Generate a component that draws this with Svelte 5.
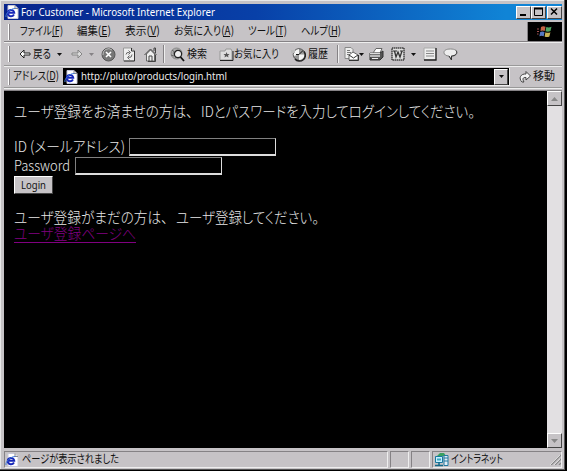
<script>
  const menus = [
    { label: 'ファイル', key: 'F', w: 43 },
    { label: '編集', key: 'E', w: 34 },
    { label: '表示', key: 'V', w: 35 },
    { label: 'お気に入り', key: 'A', w: 60 },
    { label: 'ツール', key: 'T', w: 39 },
    { label: 'ヘルプ', key: 'H', w: 40 }
  ];
</script>

{#snippet label(text, w, key = '')}
  <svg class="label" width={w} height="16">
    <text y="12" textLength={w} lengthAdjust="spacingAndGlyphs">{text}{key ? `(${key})` : ''}</text>
    {#if key}<path d="M{w - 11} 13.500h7" stroke="#111" />{/if}
  </svg>
{/snippet}

{#snippet latin(text, w)}
  <svg class="label latin" width={w} height="16"><text y="12" textLength={w} lengthAdjust="spacingAndGlyphs">{text}</text></svg>
{/snippet}

{#snippet line(text, w)}
  <svg class="line" width={w} height="16"><text y="13" textLength={w} lengthAdjust="spacingAndGlyphs">{text}</text></svg>
{/snippet}

{#snippet page()}
  <svg class="page" width="14" height="14" viewBox="0 0 14 14">
    <path d="M3 .5h7l3 3v10H3z" fill="#fff" stroke="#c8c8d8" />
    <path d="M10 .5v3h3" fill="none" stroke="#888" />
    <path d="M9 9.5C7.500 12 3 11.800 2.800 8.300 2.600 4.500 8.700 3.500 9.200 7.700H4" fill="none" stroke="#1828b8" stroke-width="2" />
    <path d="M1 12C0 9 6 3 10.500 3.500" fill="none" stroke="#4078d8" />
  </svg>
{/snippet}

{#snippet caret(dim = false)}
  <svg class="caret" class:dim width="5" height="3"><path d="M0 0h5L2.500 3z" /></svg>
{/snippet}

<div class="window">
  <header class="title">
    {@render page()}
    {@render latin('For Customer - Microsoft Internet Explorer', 194)}
    <div class="controls">
      <button aria-label="Minimize"><svg width="11" height="10"><path d="M2 8h6" stroke="#000" stroke-width="2" /></svg></button>
      <button aria-label="Maximize"><svg width="11" height="10"><path d="M1.500 1v7.500h8V1" fill="none" stroke="#000" /><path d="M1 1.500h9" stroke="#000" stroke-width="2" /></svg></button>
      <button class="close" aria-label="Close"><svg width="11" height="10"><path d="M2 1.500l6 6M8 1.500l-6 6" stroke="#000" stroke-width="1.500" /></svg></button>
    </div>
  </header>

  <nav class="menu">
    <i class="grip"></i>
    <div class="items">
      {#each menus as m}{@render label(m.label, m.w, m.key)}{/each}
    </div>
    <div class="brand">
      <svg width="16" height="14" viewBox="0 0 16 14">
        <path d="M4 2q2-1.500 4.500-.3L7.700 6Q5.500 5 3.500 6z" fill="#c56445" />
        <path d="M9.300 2q2.500 1 5.200-.2L13.500 6q-2.500 1.200-5 .2z" fill="#4fa562" />
        <path d="M3.200 7q2-1 4.300 0l-.8 4.300q-2.200-1-4.300 0z" fill="#5578c0" />
        <path d="M8.400 7.300q2.500 1 5 0l-1 4.200q-2.300 1-4.800 0z" fill="#c9b454" />
        <path d="M0 4h2M0 6.500h2M0 9h1.500" stroke="#a05050" />
      </svg>
    </div>
  </nav>

  <div class="tools">
    <i class="grip"></i>
    <svg class="back" width="12" height="10" viewBox="0 0 12 10"><path d="M5 1L1 5l4 4V6h6V4H5z" fill="#fff" stroke="#222" /></svg>
    {@render label('戻る', 18)}
    {@render caret()}
    <svg class="fwd" width="12" height="10" viewBox="0 0 12 10"><path d="M7 1l4 4-4 4V6H1V4h6z" fill="#ddd" stroke="#858585" /></svg>
    {@render caret(true)}
    <svg class="stop" width="15" height="15" viewBox="0 0 15 15"><circle cx="7.500" cy="7.500" r="6.500" fill="#777" stroke="#555" /><path d="M2 8a5.500 5.500 0 0 1 9-5" fill="none" stroke="#bbb" /><path d="M5 5l5 5M10 5l-5 5" stroke="#fff" stroke-width="1.600" /></svg>
    <svg class="refresh" width="12" height="15" viewBox="0 0 12 15"><path d="M.5 1h8l3 3v10H.5z" fill="#eee" stroke="#999" /><path d="M8.500 1v3h3M11.500 4v10H1" fill="none" stroke="#333" /><path d="M3 7.500Q3 5 6.500 5.500M5.500 3.500l2 2-2 2M9 7.500Q9 11 5.500 10.500M6.500 8.500l-2 2 2 2" fill="none" stroke="#666" /></svg>
    <svg class="home" width="14" height="15" viewBox="0 0 14 15"><path d="M2.500 7v7h8V7L6.500 3z" fill="#eee" stroke="#666" /><path d="M.5 8l6-6 6 6M10 4V1h1.500v5M5 14V9h3v5" fill="none" stroke="#444" /><path d="M11.500 8v6.500H4" fill="none" stroke="#444" /></svg>
    <i class="sep"></i>
    <svg class="search" width="15" height="15" viewBox="0 0 15 15"><circle cx="6.500" cy="6.500" r="5.500" fill="#aaa" stroke="#888" /><path d="M2 3q3 1 2 4l2 4M1 8l3 1" fill="none" stroke="#666" /><circle cx="8" cy="7" r="3.600" fill="#eee" stroke="#222" stroke-width="1.200" /><path d="M10.500 10l3.500 4" stroke="#111" stroke-width="1.800" /></svg>
    {@render label('検索', 20)}
    <svg class="fav" width="15" height="13" viewBox="0 0 15 13"><path d="M1 3h5l1-2h5l1 2v9H1z" fill="#ddd" stroke="#999" /><path d="M14 3v9.500H1" fill="none" stroke="#222" /><path d="M7.500 4l.8 2H10.500L9 7.500l.5 2-2-1.200L5.500 9.500 6 7.500 4.500 6h2.300z" fill="#555" /></svg>
    {@render label('お気に入り', 45)}
    <svg class="history" width="15" height="15" viewBox="0 0 15 15"><circle cx="8" cy="7.500" r="5.800" fill="#999" stroke="#555" /><path d="M8 7.500V2a5.500 5.500 0 0 0-5 7zM8 7.500h5.500A5.500 5.500 0 0 1 8 13z" fill="#f4f4f4" /><path d="M13 4.500A5.800 5.800 0 0 1 4 12" fill="none" stroke="#222" stroke-width="1.500" /><path d="M8 7.500l4-4M8 7.500H5" stroke="#111" /><path d="M0 3h4v3H0" fill="#bbb" /></svg>
    {@render label('履歴', 20)}
    <i class="sep second"></i>
    <svg class="mail" width="15" height="14" viewBox="0 0 15 14"><path d="M1 .5h6l2 2v9H1z" fill="#eee" stroke="#888" /><path d="M3 3.500h3M3 5.500h4M3 7.500h3" stroke="#777" /><path d="M5 8l4-3 5 3v5H5z" fill="#fff" stroke="#666" /><path d="M5 8l4.500 3L14 8M14.500 8v5.500H5" fill="none" stroke="#333" /></svg>
    {@render caret()}
    <svg class="print" width="15" height="13" viewBox="0 0 15 13"><path d="M4 5L7 .5h6L11 5z" fill="#fff" stroke="#666" /><path d="M1 5h10l3-2v6l-3 3H1z" fill="#555" stroke="#333" /><path d="M1 5.500h10M1 8h10" stroke="#ddd" stroke-width="1.300" /><path d="M3 10.500h6" stroke="#eee" /></svg>
    <svg class="word" width="14" height="14" viewBox="0 0 14 14"><path d="M1 1h12v12H1z" fill="#ddd" stroke="#444" stroke-width="1.500" stroke-dasharray="1.500 .5" /><path d="M3.500 4l1.500 6 2-5 2 5 2-6" fill="none" stroke="#333" stroke-width="1.300" /><path d="M2 4h4M9 4h3" stroke="#333" /></svg>
    {@render caret()}
    <svg class="edit" width="14" height="14" viewBox="0 0 14 14"><path d="M1 1h12v12H1z" fill="#eee" stroke="#aaa" /><path d="M13 1v12H1" fill="none" stroke="#222" stroke-width="1.300" /><path d="M3 4h8M3 6.500h8M3 9h8" stroke="#888" /></svg>
    <svg class="talk" width="15" height="13" viewBox="0 0 15 13"><path d="M7.500 1C3 1 1 2.500 1 4.500S3 8 6 8l2.500 4V8C12.500 8 14 6.500 14 4.500S12 1 7.500 1z" fill="#eee" stroke="#888" /><path d="M13 2.500c2 3-1 5.500-4.500 5.500v4L6 8" fill="none" stroke="#333" /></svg>
  </div>

  <div class="address">
    <i class="grip"></i>
    {@render label('アドレス', 46, 'D')}
    <div class="url">
      {@render page()}
      {@render latin('http://pluto/products/login.html', 146)}
      <button class="drop" aria-label="アドレス">{@render caret()}</button>
    </div>
    <svg class="go" width="13" height="14" viewBox="0 0 13 14"><path d="M3 12C-1 8 2 3.500 7 4V1.500L11.500 6 7 10V7.500C4 7 3 9 5 12z" fill="#f4f4f4" stroke="#444" /></svg>
    {@render label('移動', 22)}
  </div>

  <div class="view">
    <main>
      <p class="guide">{@render line('ユーザ登録をお済ませの方は、', 179)}{@render line('IDとパスワードを入力してログインしてください。', 274)}</p>
      <form>
        <div class="row">{@render line('ID (メールアドレス)', 111)}<input type="text" aria-label="ID" /></div>
        <div class="row">{@render line('Password', 56)}<input type="password" aria-label="Password" /></div>
        <button class="login" type="button">{@render latin('Login', 25)}</button>
      </form>
      <p class="register">{@render line('ユーザ登録がまだの方は、', 154)}{@render line('ユーザ登録してください。', 143)}</p>
      <a href="#register">{@render line('ユーザ登録ページへ', 122)}</a>
    </main>
    <aside>
      <button aria-label="Up"><svg width="7" height="4"><path d="M0 4h7L3.500 0z" fill="#888" /></svg></button>
      <button aria-label="Down"><svg width="7" height="4"><path d="M0 0h7L3.500 4z" fill="#888" /></svg></button>
    </aside>
  </div>

  <footer>
    <div class="pane message">{@render page()}{@render label('ページが表示されました', 97)}</div>
    <div class="pane small"></div>
    <div class="pane small"></div>
    <div class="pane zone">
      <svg class="net" width="15" height="15" viewBox="0 0 15 15"><path d="M3 4l3-3h4l2 3z" fill="#39a060" /><path d="M1.500 4.500h7v6h-7z" fill="#c8f0ff" stroke="#1878a0" /><path d="M3 7.500h4" stroke="#38a8c0" stroke-width="2" /><path d="M1 13.500h8M5 10v3" stroke="#126888" stroke-width="1.500" /><path d="M10 3.500h4v10h-4z" fill="#e0edf5" stroke="#2078a0" /><path d="M10 6h4M10 9h4" stroke="#2078a0" /></svg>
      {@render label('イントラネット', 52)}
      <svg class="resize" width="11" height="11"><path d="M1 11L11 1M5 11l6-6M9 11l2-2" stroke="#888" stroke-width="1.400" /><path d="M0 11L10 1M4 11l6-6" stroke="#eee" stroke-width=".7" /></svg>
    </div>
  </footer>
</div>

<style>
  :global(body) { margin: 0; background: #000; }
  svg { display: block; flex: none; }
  button { padding: 0; display: flex; align-items: center; justify-content: center; background: #c6c3c6; border: 1px solid; border-color: #fff #444 #444 #fff; box-sizing: border-box; flex: none; }
  .window { box-sizing: border-box; width: 565px; height: 470px; padding: 4px 2px 1px 4px; background: #c6c3c6; border-right: 1px solid #555; border-bottom: 1px solid #555; box-shadow: inset 1px 1px #e8e8e8; display: flex; flex-direction: column; }
  .window > * { flex: none; }
  .label, .line { overflow: visible; font: 11.500px "Noto Sans CJK JP", sans-serif; font-feature-settings: "palt"; fill: #111; }
  .latin { font: 10.500px "Noto Sans", sans-serif; }
  .line { font-size: 15px; font-weight: 300; fill: #e8e8e8; }
  .grip { width: 1px; height: 16px; flex: none; margin-left: 4px; background: #fff; border-right: 1px solid #858285; }
  .caret { fill: #111; }
  .caret.dim { fill: #858285; }

  .title { height: 16px; display: flex; align-items: center; padding-left: 1px; background: linear-gradient(90deg, #08248c, #0840a8 45%, #1084d6 90%); }
  .title .label { margin: -1px 0 0 2px; fill: #fff; }
  .controls { display: flex; margin-left: auto; }
  .controls button { width: 15px; height: 13px; }
  .controls .close { margin-left: 1px; }

  .menu { display: flex; align-items: center; height: 19px; margin-top: 2px; border-bottom: 1px solid #858285; box-shadow: 0 1px #eee; }
  .items { display: flex; gap: 14px; margin-left: 10px; }
  .items .label { margin-top: -2px; }
  .brand { margin-left: auto; width: 34px; height: 19px; background: #000; display: flex; align-items: center; justify-content: center; box-shadow: -1px 0 #858285; }

  .tools { display: flex; align-items: center; height: 22px; margin-top: 1px; border-bottom: 1px solid #999; box-shadow: 0 1px #eee; }
  .back { margin-left: 9px; }
  .tools .label { margin: -1px 0 0 2px; }
  .tools .caret { margin-left: 6px; }
  .fwd { margin-left: 9px; }
  .stop { margin-left: 7px; }
  .refresh { margin-left: 7px; }
  .home { margin-left: 9px; }
  .sep { width: 1px; height: 18px; margin-left: 5px; background: #858285; border-right: 1px solid #eee; flex: none; }
  .search { margin-left: 5px; }
  .fav { margin-left: 12px; }
  .tools .fav + .label { margin-left: 0; }
  .history { margin-left: 12px; }
  .second { margin-left: 9px; }
  .mail { margin-left: 5px; }
  .tools .mail + .caret { margin-left: 0; }
  .print { margin-left: 5px; }
  .word { margin-left: 7px; }
  .edit { margin-left: 7px; }
  .talk { margin-left: 6px; }

  .address { display: flex; align-items: center; height: 20px; margin-top: 1px; border-bottom: 1px solid #999; box-shadow: 0 1px #eee; }
  .address > .label { margin: -2px 0 0 3px; }
  .url { box-sizing: border-box; width: 447px; height: 18px; margin-left: 4px; display: flex; align-items: center; padding: 0 1px; background: #000; border-right: 1px solid #eee; border-bottom: 1px solid #eee; }
  .url .label { margin: -1px 0 0 3px; fill: #eee; }
  .drop { width: 14px; height: 16px; margin-left: auto; }
  .go { margin-left: 9px; }
  .address > .go + .label { margin-left: 1px; }

  .view { display: flex; height: 357px; margin-top: 3px; box-shadow: 0 -1px #858285; }
  main { flex: 1; background: #000; padding: 13px 0 0 10px; box-sizing: border-box; }
  p { margin: 0; display: flex; }
  .guide { gap: 8px; }
  form { margin-top: 17px; }
  .row { display: flex; align-items: center; height: 19px; }
  .row + .row { height: 20px; }
  .row input { box-sizing: border-box; width: 147px; height: 18px; margin: 0 0 0 4px; padding: 0; background: #000; color: #fff; border: 1px solid; border-color: #808080 #ddd #ddd #808080; border-bottom-width: 2px; }
  .row + .row input { margin-left: 5px; }
  .login { width: 39px; height: 18px; }
  .register { gap: 8px; margin-top: 16px; }
  main a { display: block; width: 122px; height: 16px; border-bottom: 1px solid #800080; }
  main a .line { fill: #800080; }
  aside { width: 15px; display: flex; flex-direction: column; justify-content: space-between; background: #e2e0e2; }
  aside button { width: 15px; height: 15px; }

  footer { display: flex; gap: 2px; height: 17px; margin-top: 3px; }
  .pane { box-sizing: border-box; border: 1px solid; border-color: #858285 #eee #eee #858285; display: flex; align-items: center; }
  .message { width: 384px; }
  .pane .label { margin-top: -2px; }
  .message .label { margin-left: 3px; }
  .small { width: 19px; }
  .zone { flex: 1; padding-left: 1px; }
  .zone .label { margin-left: 2px; }
  .resize { margin-left: auto; }
</style>
